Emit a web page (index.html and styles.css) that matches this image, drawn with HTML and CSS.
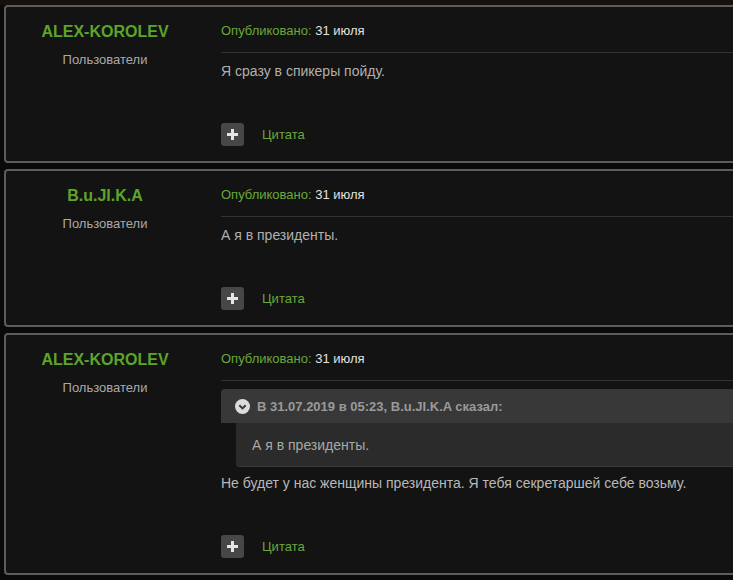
FILE: index.html
```html
<!DOCTYPE html>
<html lang="ru">
<head>
<meta charset="utf-8">
<title>Posts</title>
<link rel="stylesheet" href="styles.css">
</head>
<body>
<div class="topic">
  <article class="post">
    <aside class="author">
      <div class="name">ALEX-KOROLEV</div>
      <div class="group">Пользователи</div>
    </aside>
    <div class="main">
      <div class="meta"><span class="label">Опубликовано:</span> <span class="date">31 июля</span></div>
      <div class="content"><p>Я сразу в спикеры пойду.</p></div>
      <div class="actions">
        <span class="plus"><svg width="11" height="11" viewBox="0 0 11 11"><path d="M4 0h3v4h4v3H7v4H4V7H0V4h4z" fill="#e6e6e6"/></svg></span>
        <span class="quote-link">Цитата</span>
      </div>
    </div>
  </article>

  <article class="post">
    <aside class="author">
      <div class="name">B.u.JI.K.A</div>
      <div class="group">Пользователи</div>
    </aside>
    <div class="main">
      <div class="meta"><span class="label">Опубликовано:</span> <span class="date">31 июля</span></div>
      <div class="content"><p>А я в президенты.</p></div>
      <div class="actions">
        <span class="plus"><svg width="11" height="11" viewBox="0 0 11 11"><path d="M4 0h3v4h4v3H7v4H4V7H0V4h4z" fill="#e6e6e6"/></svg></span>
        <span class="quote-link">Цитата</span>
      </div>
    </div>
  </article>

  <article class="post">
    <aside class="author">
      <div class="name">ALEX-KOROLEV</div>
      <div class="group">Пользователи</div>
    </aside>
    <div class="main">
      <div class="meta"><span class="label">Опубликовано:</span> <span class="date">31 июля</span></div>
      <div class="content">
        <blockquote class="quote">
          <div class="quote-head">
            <svg class="chev" width="15" height="15" viewBox="0 0 15 15"><circle cx="7.5" cy="7.5" r="7.5" fill="#dcdcdc"/><path d="M4.3 6.2l3.2 3.2 3.2-3.2" fill="none" stroke="#3a3a3a" stroke-width="2"/></svg>
            <span>В 31.07.2019 в 05:23, B.u.JI.K.A сказал:</span>
          </div>
          <div class="quote-body">А я в президенты.</div>
        </blockquote>
        <p class="after">Не будет у нас женщины президента. Я тебя секретаршей себе возьму.</p>
      </div>
      <div class="actions">
        <span class="plus"><svg width="11" height="11" viewBox="0 0 11 11"><path d="M4 0h3v4h4v3H7v4H4V7H0V4h4z" fill="#e6e6e6"/></svg></span>
        <span class="quote-link">Цитата</span>
      </div>
    </div>
  </article>
</div>
</body>
</html>
```

FILE: styles.css
```css
html, body {
  margin: 0;
  padding: 0;
}
body {
  background: #0a0a0a;
  font-family: "Liberation Sans", Arial, sans-serif;
  font-size: 13px;
  overflow: hidden;
}
.topic {
  display: flex;
  flex-direction: column;
  gap: 6px;
  padding-top: 5px;
  background: linear-gradient(#16110c 0, #16110c 5px, #0a0a0a 5px);
}
.post {
  display: flex;
  margin-left: 4px;
  margin-right: -20px;
  background: #131313;
  border: 2px solid #5c5c5c;
  border-radius: 4px;
}
.author {
  width: 198px;
  flex: none;
  text-align: center;
  padding-top: 15px;
}
.name {
  color: #5da42a;
  font-weight: bold;
  font-size: 16px;
  line-height: 20px;
}
.group {
  color: #a9a9a9;
  font-size: 13px;
  line-height: 16px;
  margin-top: 10px;
}
.main {
  flex: 1;
  margin-left: 17px;
  padding-top: 16px;
  padding-bottom: 15px;
  display: flex;
  flex-direction: column;
}
.meta {
  line-height: 16px;
  padding-bottom: 13px;
  border-bottom: 1px solid #333;
}
.label {
  color: #6aa83a;
}
.date {
  color: #e2e2e2;
}
.content {
  padding-top: 10px;
}
.content p {
  margin: 0;
  color: #b0b0b0;
  font-size: 14px;
  line-height: 17px;
}
.quote {
  margin: -2px 0 8px 0;
}
.quote-head {
  display: flex;
  align-items: center;
  gap: 7px;
  height: 34px;
  padding-left: 14px;
  background: #383838;
  border-radius: 4px 0 0 0;
  color: #9a9a9a;
  font-weight: bold;
}
.chev {
  flex: none;
}
.quote-body {
  margin-left: 15px;
  height: 43px;
  padding-left: 16px;
  display: flex;
  align-items: center;
  background: #2b2b2b;
  border-bottom: 1px solid #3a3a3a;
  border-radius: 0 0 0 4px;
  color: #a8a8a8;
  font-size: 14px;
}
.content p.after {
  color: #b8b8b8;
}
.actions {
  display: flex;
  align-items: center;
  margin-top: 43px;
}
.plus {
  width: 23px;
  height: 23px;
  border-radius: 3px;
  background: #474747;
  display: flex;
  align-items: center;
  justify-content: center;
}
.quote-link {
  color: #6aa83a;
  margin-left: 18px;
  line-height: 16px;
}
```
